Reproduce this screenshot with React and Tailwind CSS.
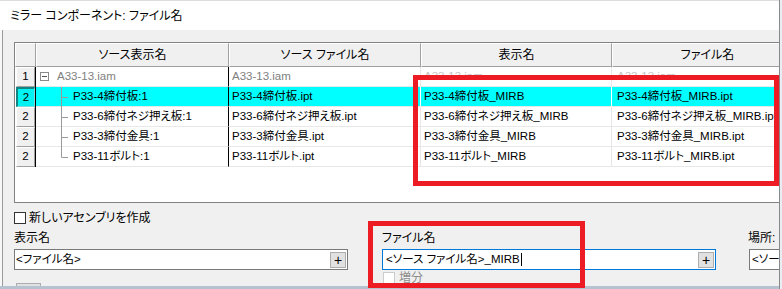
const rows = [
  { n: '1', c1: 'A33-13.iam', c2: 'A33-13.iam', c3: 'A33-13.iam', c4: 'A33-13.iam', root: true },
  { n: '2', c1: 'P33-4締付板:1', c2: 'P33-4締付板.ipt', c3: 'P33-4締付板_MIRB', c4: 'P33-4締付板_MIRB.ipt', sel: true },
  { n: '2', c1: 'P33-6締付ネジ押え板:1', c2: 'P33-6締付ネジ押え板.ipt', c3: 'P33-6締付ネジ押え板_MIRB', c4: 'P33-6締付ネジ押え板_MIRB.ipt' },
  { n: '2', c1: 'P33-3締付金具:1', c2: 'P33-3締付金具.ipt', c3: 'P33-3締付金具_MIRB', c4: 'P33-3締付金具_MIRB.ipt' },
  { n: '2', c1: 'P33-11ボルト:1', c2: 'P33-11ボルト.ipt', c3: 'P33-11ボルト_MIRB', c4: 'P33-11ボルト_MIRB.ipt', last: true },
];

function HeaderCell({ w, children }) {
  return (
    <div
      className={`${w} h-full shrink-0 flex items-center justify-center border-t border-l border-t-white border-l-white border-r border-r-[#a0a0a0] border-b border-b-[#a0a0a0] text-[12px]`}
    >
      {children}
    </div>
  );
}

function Tree({ last }) {
  return (
    <svg width="12" height="20" viewBox="0 0 12 20" className="shrink-0">
      <line x1="0.5" y1="0" x2="0.5" y2={last ? 10.5 : 20} stroke="#9a9a9a" strokeWidth="1" />
      <line x1="0.5" y1="10.5" x2="7" y2="10.5" stroke="#9a9a9a" strokeWidth="1" />
    </svg>
  );
}

function Minus() {
  return (
    <svg width="9" height="9" viewBox="0 0 9 9" className="shrink-0">
      <rect x="0.5" y="0.5" width="8" height="8" fill="white" stroke="#8a8a8a" strokeWidth="1" />
      <line x1="2" y1="4.5" x2="7" y2="4.5" stroke="#555" strokeWidth="1" />
    </svg>
  );
}

function Row({ r }) {
  const bg = r.sel ? 'bg-[#00ffff]' : 'bg-white';
  const sep = r.sel ? 'border-r-white' : 'border-r-[#e6e6e6]';
  return (
    <div className="flex h-[20px] shrink-0">
      <div className="w-[21px] h-full shrink-0 bg-white pl-[1px] border-r border-black">
        {r.sel ? (
          <div className="w-full h-full flex items-center justify-center bg-[#00f2f2] border-t-2 border-l-2 border-[#138585] border-b border-r border-b-[#7fd8d8] border-r-[#7fd8d8]">
            {r.n}
          </div>
        ) : (
          <div className="w-full h-full flex items-center justify-center bg-[#f0f0f0] border-t border-l border-t-white border-l-white border-b border-r border-b-[#a0a0a0] border-r-[#a0a0a0]">
            {r.n}
          </div>
        )}
      </div>
      <div className={`w-[193px] h-full shrink-0 flex items-center border-r border-r-black border-b border-b-[#e8e8e8] ${bg}`}>
        {r.root ? (
          <>
            <div className="w-[4px] shrink-0" />
            <Minus />
            <span className="ml-[8px] text-[#808080]">{r.c1}</span>
          </>
        ) : (
          <>
            <div className="w-[25px] shrink-0" />
            <Tree last={r.last} />
            <span className="whitespace-nowrap">{r.c1}</span>
          </>
        )}
      </div>
      <div className={`w-[192px] h-full shrink-0 flex items-center pl-[3px] border-r ${sep} border-b border-b-[#e8e8e8] whitespace-nowrap ${bg} ${r.root ? 'text-[#808080]' : ''}`}>
        {r.c2}
      </div>
      <div className={`w-[191px] h-full shrink-0 flex items-center pl-[3px] border-r ${sep} border-b border-b-[#e8e8e8] whitespace-nowrap ${bg} ${r.root ? 'text-[#c4c4c4]' : ''}`}>
        {r.c3}
      </div>
      <div className={`w-[191px] h-full shrink-0 flex items-center pl-[5px] border-r ${sep} border-b border-b-[#e8e8e8] whitespace-nowrap ${bg} ${r.root ? 'text-[#c4c4c4]' : ''}`}>
        {r.c4}
      </div>
      <div className={`flex-1 h-full border-b border-b-[#e8e8e8] ${bg}`} />
    </div>
  );
}

function PlusBtn() {
  return (
    <div className="w-[16px] h-[16px] shrink-0 flex items-center justify-center border border-[#adadad] bg-[#e1e1e1] text-[14px] leading-none">
      +
    </div>
  );
}

export default function App() {
  return (
    <div className="relative w-[782px] h-[289px] overflow-hidden flex bg-[#f4f4f4] [font-family:Liberation_Sans,Noto_Sans_CJK_JP,sans-serif] [font-feature-settings:'palt'] text-[11.5px] text-black leading-none">
      <div className="w-[780px] h-full shrink-0 flex flex-col border-r border-[#8a8a8a] overflow-hidden">
        <div className="h-[30px] shrink-0 bg-white border-t border-[#dcdcdc] flex items-center pl-[10px] text-[12px]">
          ミラー コンポーネント: ファイル名
        </div>
        <div className="flex-1 flex min-h-0">
          <div className="w-[2px] shrink-0 bg-[#f7f7f7]" />
          <div className="flex-1 min-w-0 bg-[#f0f0f0] border-l border-[#9a9a9a] pl-[11px] pt-[12px] overflow-hidden flex flex-col">
            <div className="w-[830px] h-[161px] shrink-0 border border-[#828282] bg-white flex flex-col">
              <div className="flex h-[24px] shrink-0 bg-[#f0f0f0]">
                <HeaderCell w="w-[21px]" />
                <HeaderCell w="w-[193px]">ソース表示名</HeaderCell>
                <HeaderCell w="w-[192px]">ソース ファイル名</HeaderCell>
                <HeaderCell w="w-[191px]">表示名</HeaderCell>
                <HeaderCell w="w-[191px]">ファイル名</HeaderCell>
                <div className="flex-1 h-full border-t border-t-white border-b border-b-[#a0a0a0]" />
              </div>
              {rows.map((r, i) => (
                <Row key={i} r={r} />
              ))}
              <div className="flex-1 bg-white" />
            </div>

            <div className="flex items-center mt-[9px] h-[12px] gap-[3px] shrink-0">
              <div className="w-[12px] h-[12px] border border-[#333333] bg-white" />
              <span className="text-[12px]">新しいアセンブリを作成</span>
            </div>

            <div className="flex mt-[7px] shrink-0">
              <div className="w-[334px] shrink-0 flex flex-col">
                <div className="h-[14px] flex items-center text-[12px]">表示名</div>
                <div className="mt-[4px] h-[21px] flex items-center bg-white border border-[#7a7a7a] pl-[1px] pr-[1px]">
                  <span className="flex-1">&lt;ファイル名&gt;</span>
                  <PlusBtn />
                </div>
                <div className="mt-[13px] ml-[2px] w-[25px] h-[8px] border border-[#adadad] bg-[#e1e1e1]" />
              </div>

              <div className="ml-[34px] w-[334px] shrink-0 flex flex-col">
                <div className="h-[14px] flex items-center text-[12px]">ファイル名</div>
                <div className="mt-[4px] h-[21px] flex items-center bg-white border border-[#0078d7] pl-[3px] pr-[1px]">
                  <span className="flex-1 flex items-center">
                    &lt;ソース ファイル名&gt;_MIRB
                    <span className="inline-block w-px h-[13px] bg-black ml-[1px]" />
                  </span>
                  <PlusBtn />
                </div>
                <div className="mt-[2px] ml-[1px] flex items-center gap-[4px]">
                  <div className="w-[12px] h-[12px] border border-[#cccccc] bg-white" />
                  <span className="text-[12px] text-[#8d8d8d]">増分</span>
                </div>
              </div>

              <div className="ml-[33px] w-[120px] shrink-0 flex flex-col">
                <div className="h-[14px] flex items-center text-[12px] -ml-[1px]">場所:</div>
                <div className="mt-[4px] h-[21px] flex items-center bg-white border border-[#7a7a7a] pl-[2px] whitespace-nowrap overflow-hidden">
                  &lt;ソース ファイル名&gt;
                </div>
              </div>
            </div>
          </div>
        </div>
        <div className="h-[3px] shrink-0 bg-[#b7c2d1]" />
      </div>
      <div className="flex-1 bg-[#e9eef5]" />

      <div className="absolute left-[413px] top-[75px] w-[366px] h-[111px] border-[5px] border-[#ed1c24]" />
      <div className="absolute left-[368px] top-[221px] w-[217px] h-[67px] border-[5px] border-[#ed1c24]" />
    </div>
  );
}
